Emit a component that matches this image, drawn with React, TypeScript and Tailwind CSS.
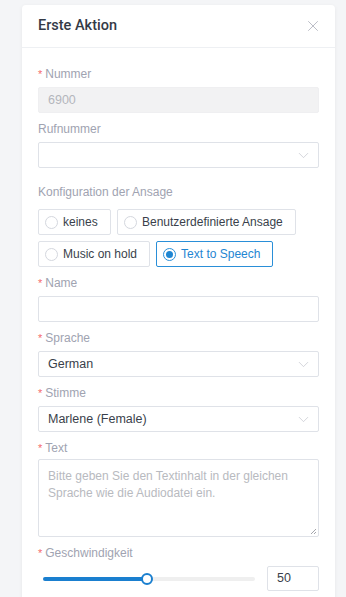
import { X, ChevronDown } from 'lucide-react';

const font = { fontFamily: '"Liberation Sans", Arial, sans-serif' };

function Label({ text, required }: { text: string; required?: boolean }) {
    return (
        <div className="h-4 mb-[5px] flex items-center text-[12px] leading-4 text-[#a0a3b1]">
            {required && <span className="text-[#f56c6c] mr-[3px] text-[11px]">*</span>}
            {text}
        </div>
    );
}

function Select({ value }: { value?: string }) {
    return (
        <div className="h-[26px] border border-[#dfe2e8] rounded-[2px] flex items-center justify-between pl-[9px] pr-[6px] text-[12.5px] text-[#3a3f4b]">
            <span>{value}</span>
            <ChevronDown className="w-[17px] h-[17px] text-[#c2c5cc]" strokeWidth={1} />
        </div>
    );
}

function Radio({ label, checked }: { label: string; checked?: boolean }) {
    return (
        <div
            className={`h-[26px] flex items-center gap-[5px] pl-[6px] pr-[12px] rounded-[2px] border text-[12px] ${
                checked ? 'border-[#2a8fd8] text-[#1f86d2]' : 'border-[#dfe2e8] text-[#3a3f4b]'
            }`}
        >
            {checked ? (
                <span className="w-[13px] h-[13px] rounded-full border border-[#2a8fd8] flex items-center justify-center">
                    <span className="w-[7px] h-[7px] rounded-full bg-[#1f86d2]" />
                </span>
            ) : (
                <span className="w-[13px] h-[13px] rounded-full border border-[#d4d7de]" />
            )}
            {label}
        </div>
    );
}

export default function App() {
    return (
        <div className="min-h-[597px] bg-[#f4f5f7] pt-[5px]" style={font}>
            <div className="ml-[22px] w-[313px] bg-white rounded-[4px] shadow-[0_1px_4px_rgba(0,0,0,0.06)]">
                {/* Header */}
                <div className="h-[43px] border-b border-[#eef0f3] flex items-center justify-between pl-4 pr-[13px]">
                    <span className="text-[14.5px] font-medium text-[#343a46]" style={{ fontFamily: 'Roboto, "Liberation Sans", sans-serif' }}>
                        Erste Aktion
                    </span>
                    <X className="w-[18px] h-[18px] text-[#a5a8b4]" strokeWidth={1} />
                </div>

                <div className="px-4 pt-[18px] pb-6">
                    <Label text="Nummer" required />
                    <div className="h-[26px] bg-[#f2f2f3] border border-[#efeff1] rounded-[2px] flex items-center pl-[9px] text-[12.5px] text-[#b4b6bc] mb-[8px]">
                        6900
                    </div>

                    <Label text="Rufnummer" />
                    <div className="mb-[16px]">
                        <Select />
                    </div>

                    <div className="h-4 mb-[9px] flex items-center text-[12px] text-[#a0a3b1]">Konfiguration der Ansage</div>
                    <div className="flex flex-col gap-[6px] mb-[8px]">
                        <div className="flex gap-[6px]">
                            <div className="w-[73px]"><Radio label="keines" /></div>
                            <Radio label="Benutzerdefinierte Ansage" />
                        </div>
                        <div className="flex gap-[6px]">
                            <Radio label="Music on hold" />
                            <Radio label="Text to Speech" checked />
                        </div>
                    </div>

                    <Label text="Name" required />
                    <div className="h-[26px] border border-[#dfe2e8] rounded-[2px] mb-[8px]" />

                    <Label text="Sprache" required />
                    <div className="mb-[8px]">
                        <Select value="German" />
                    </div>

                    <Label text="Stimme" required />
                    <div className="mb-[8px]">
                        <Select value="Marlene (Female)" />
                    </div>

                    <div className="h-4 mb-[3px] flex items-center text-[12px] text-[#a0a3b1]">
                        <span className="text-[#f56c6c] mr-[3px] text-[11px]">*</span>Text
                    </div>
                    <div className="relative h-[78px] border border-[#dfe2e8] rounded-[2px] px-[9px] pt-[8px] text-[12px] leading-[17px] text-[#b8bac0] mb-[8px]">
                        Bitte geben Sie den Textinhalt in der gleichen Sprache wie die Audiodatei ein.
                        <svg className="absolute right-[1px] bottom-[1px]" width="7" height="7" viewBox="0 0 7 7">
                            <path d="M6 1 L1 6 M6 4 L4 6" stroke="#9a9ca3" strokeWidth="0.9" />
                        </svg>
                    </div>

                    <Label text="Geschwindigkeit" required />
                    <div className="flex items-center">
                        <div className="relative w-[212px] h-[4px] ml-[5px] rounded-full bg-[#efefef]">
                            <div className="absolute left-0 top-0 h-[4px] w-[105px] rounded-full bg-[#1a7fcf]" />
                            <div className="absolute left-[98px] top-[-4px] w-[12px] h-[12px] rounded-full bg-white border-2 border-[#1a7fcf]" />
                        </div>
                        <div className="ml-auto w-[52px] h-[25px] border border-[#dfe2e8] rounded-[2px] flex items-center pl-[9px] text-[12.5px] text-[#3a3f4b]">
                            50
                        </div>
                    </div>
                </div>
            </div>
        </div>
    );
}
